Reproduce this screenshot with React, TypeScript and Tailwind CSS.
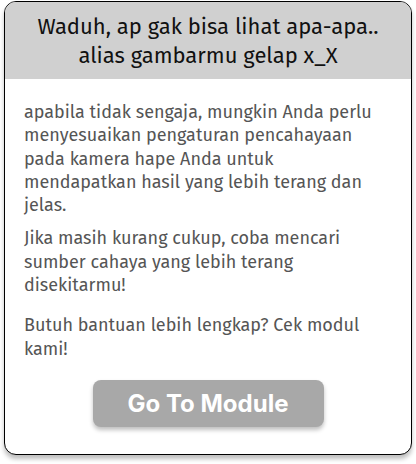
export default function App() {
    return (
        <div className="w-[416px] h-[464px] bg-white pt-px px-1">
            <div className="w-[408px] h-[454px] flex flex-col border border-black rounded-xl overflow-hidden shadow-[0_4px_4px_rgba(0,0,0,0.25)] bg-white">
                <div className="h-[77px] bg-[#d0d0d0] flex items-center justify-center text-center text-[22px] leading-[29px] text-[#111] font-['Fira_Sans','Noto_Sans',sans-serif]">
                    Waduh, ap gak bisa lihat apa-apa..<br />alias gambarmu gelap x_X
                </div>
                <div className="flex flex-col pl-[19px] pr-[22px] pt-[22px] text-[18px] leading-[23.3px] text-[#555] font-['Fira_Sans','Noto_Sans',sans-serif]">
                    <p>apabila tidak sengaja, mungkin Anda perlu menyesuaikan pengaturan pencahayaan pada kamera hape Anda untuk mendapatkan hasil yang lebih terang dan jelas.</p>
                    <p className="mt-[10px]">Jika masih kurang cukup, coba mencari sumber cahaya yang lebih terang disekitarmu!</p>
                    <p className="mt-[17px]">Butuh bantuan lebih lengkap? Cek modul kami!</p>
                </div>
                <div className="flex justify-center mt-auto mb-[27px]">
                    <button className="w-[231px] h-[47px] rounded-lg bg-[#a8a8a8] text-white font-bold text-[24px] font-['Inter',sans-serif] shadow-[0_3px_4px_rgba(0,0,0,0.25)]">
                        Go To Module
                    </button>
                </div>
            </div>
        </div>
    );
}
